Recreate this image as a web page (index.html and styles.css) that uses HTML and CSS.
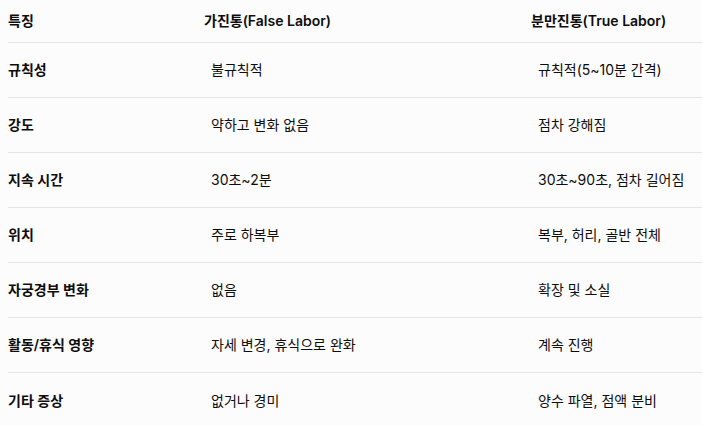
FILE: index.html
```html
<!DOCTYPE html>
<html lang="ko">
<head>
<meta charset="utf-8">
<link rel="stylesheet" href="styles.css">
</head>
<body>
<div class="table">
  <div class="row head">
    <div class="c1">특징</div>
    <div class="c2">가진통(False Labor)</div>
    <div class="c3">분만진통(True Labor)</div>
  </div>
  <div class="row">
    <div class="c1 b">규칙성</div>
    <div class="c2">불규칙적</div>
    <div class="c3">규칙적(5~10분 간격)</div>
  </div>
  <div class="row">
    <div class="c1 b">강도</div>
    <div class="c2">약하고 변화 없음</div>
    <div class="c3">점차 강해짐</div>
  </div>
  <div class="row">
    <div class="c1 b">지속 시간</div>
    <div class="c2">30초~2분</div>
    <div class="c3">30초~90초, 점차 길어짐</div>
  </div>
  <div class="row">
    <div class="c1 b">위치</div>
    <div class="c2">주로 하복부</div>
    <div class="c3">복부, 허리, 골반 전체</div>
  </div>
  <div class="row">
    <div class="c1 b">자궁경부 변화</div>
    <div class="c2">없음</div>
    <div class="c3">확장 및 소실</div>
  </div>
  <div class="row">
    <div class="c1 b">활동/휴식 영향</div>
    <div class="c2">자세 변경, 휴식으로 완화</div>
    <div class="c3">계속 진행</div>
  </div>
  <div class="row last">
    <div class="c1 b">기타 증상</div>
    <div class="c2">없거나 경미</div>
    <div class="c3">양수 파열, 점액 분비</div>
  </div>
</div>
</body>
</html>
```
FILE: styles.css
```css
html, body {
  margin: 0;
  padding: 0;
  background: #fcfcfc;
}
body {
  overflow: hidden;
  width: 702px;
  height: 425px;
  font-family: Inter, "Noto Sans CJK KR", sans-serif;
  font-size: 14px;
  color: #0d0d0d;
}
.table {
  margin-left: 8px;
  display: flex;
  flex-direction: column;
}
.row {
  display: grid;
  grid-template-columns: 196px 327px 1fr;
  align-items: center;
  height: 55px;
  border-bottom: 1px solid #e5e5e5;
  box-sizing: border-box;
}
.row.head {
  height: 43px;
  font-weight: 600;
}
.row.last {
  border-bottom: none;
}
.b {
  font-weight: 600;
}
.row:not(.head) .c2,
.row:not(.head) .c3 {
  padding-left: 7px;
}
.c1, .c2, .c3 {
  white-space: nowrap;
  line-height: 20px;
}
```
